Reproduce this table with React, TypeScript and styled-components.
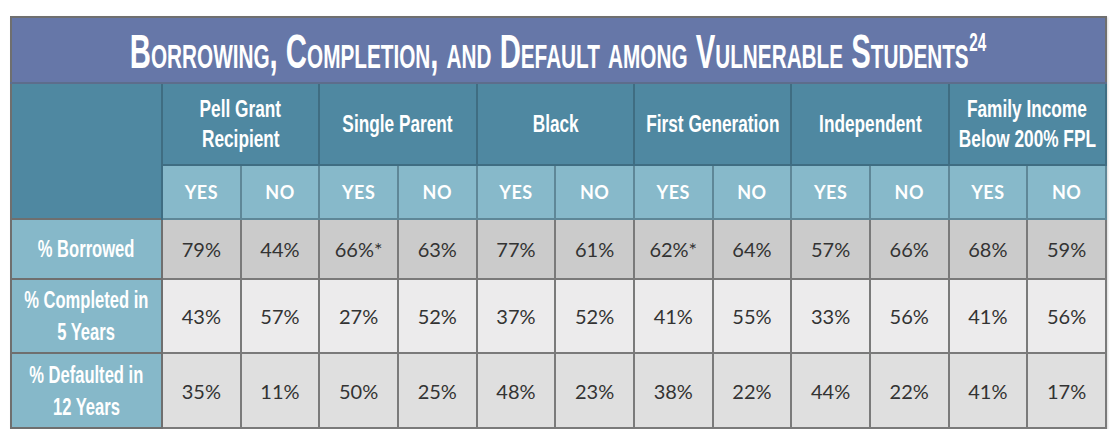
import styled, { createGlobalStyle } from 'styled-components'

const GlobalStyle = createGlobalStyle`
  html, body {
    margin: 0;
    padding: 0;
    background: #ffffff;
  }
`

// no condensed face is installed, so the headline faces are squeezed with scaleX
const condensed = `"Liberation Sans", Arial, sans-serif`

const Page = styled.div`
  padding: 16px 11px 0 10px;
`

const Table = styled.table`
  width: 1097px;
  border-collapse: collapse;
  table-layout: fixed;
  border: 2px solid #6f6f6f;
  box-shadow: 1px 1px 2px rgba(0, 0, 0, 0.15);
`

const Stack = styled.div`
  display: flex;
  flex-direction: column;
  align-items: center;
  justify-content: center;
`

const Squeeze = styled.span<{ $s: number }>`
  display: inline-block;
  white-space: nowrap;
  transform: scaleX(${({ $s }) => $s});
`

const TitleCell = styled.th`
  height: 61px;
  padding: 3px 0 0;
  background: #6677a8;
  color: #ffffff;
  font-family: ${condensed};
  font-weight: 700;
  font-size: 48px;
  line-height: 50px;
  font-variant: small-caps;
  text-align: center;
  border-bottom: 2px solid #5d6d8c;
`

const Sup = styled.sup`
  font-size: 25px;
  font-variant: normal;
  vertical-align: 17px;
  line-height: 0;
  margin-left: 1px;
`

const Corner = styled.th`
  background: #4f88a1;
  border-right: 2px solid #3f6d82;
`

const GroupCell = styled.th`
  height: 80px;
  padding: 0;
  background: #4f88a1;
  color: #ffffff;
  font-family: ${condensed};
  font-weight: 700;
  font-size: 23px;
  line-height: 30px;
  border: 2px solid #3f6d82;
  border-top: none;
`

const YesNoCell = styled.th`
  height: 52px;
  padding: 0;
  background: #87b9ca;
  color: #ffffff;
  font-family: Lato, "Open Sans", sans-serif;
  font-weight: 700;
  font-size: 18px;
  letter-spacing: 0.5px;
  text-align: center;
  border: 2px solid #5f8797;
`

const RowLabel = styled.th`
  padding: 0;
  background: #86b8c9;
  color: #ffffff;
  font-family: ${condensed};
  font-weight: 700;
  font-size: 23px;
  line-height: 32px;
  border: 2px solid #6f6f6f;
`

const Row = styled.tr<{ $h: number }>`
  height: ${({ $h }) => $h}px;
`

const DataCell = styled.td<{ $bg: string }>`
  padding: 0;
  background: ${({ $bg }) => $bg};
  color: #333333;
  font-family: Lato, "Open Sans", sans-serif;
  font-weight: 400;
  font-size: 20px;
  text-align: center;
  border: 2px solid #7a7a7a;
`

const groups = [
  ['Pell Grant', 'Recipient'],
  ['Single Parent'],
  ['Black'],
  ['First Generation'],
  ['Independent'],
  ['Family Income', 'Below 200% FPL'],
]

const rows = [
  {
    label: ['% Borrowed'],
    bg: '#cbcbcb',
    h: 60,
    values: ['79%', '44%', '66%*', '63%', '77%', '61%', '62%*', '64%', '57%', '66%', '68%', '59%'],
  },
  {
    label: ['% Completed in', '5 Years'],
    bg: '#ecebec',
    h: 74,
    values: ['43%', '57%', '27%', '52%', '37%', '52%', '41%', '55%', '33%', '56%', '41%', '56%'],
  },
  {
    label: ['% Defaulted in', '12 Years'],
    bg: '#dfdfdf',
    h: 75,
    values: ['35%', '11%', '50%', '25%', '48%', '23%', '38%', '22%', '44%', '22%', '41%', '17%'],
  },
]

function Lines({ lines, s }: { lines: string[]; s: number }) {
  return (
    <Stack>
      {lines.map((l, i) => (
        <Squeeze key={i} $s={s}>
          {l}
        </Squeeze>
      ))}
    </Stack>
  )
}

export default function App() {
  return (
    <Page>
      <GlobalStyle />
      <Table>
        <colgroup>
          <col style={{ width: 151 }} />
          {Array.from({ length: 12 }).map((_, i) => (
            <col key={i} />
          ))}
        </colgroup>
        <thead>
          <tr>
            <TitleCell colSpan={13}>
              <Stack>
                <Squeeze $s={0.61}>
                  Borrowing, Completion, and Default among Vulnerable Students<Sup>24</Sup>
                </Squeeze>
              </Stack>
            </TitleCell>
          </tr>
          <tr>
            <Corner rowSpan={2} />
            {groups.map((g, i) => (
              <GroupCell key={i} colSpan={2}>
                <Lines lines={g} s={0.75} />
              </GroupCell>
            ))}
          </tr>
          <tr>
            {groups.map((_, i) => [
              <YesNoCell key={`y${i}`}>YES</YesNoCell>,
              <YesNoCell key={`n${i}`}>NO</YesNoCell>,
            ])}
          </tr>
        </thead>
        <tbody>
          {rows.map((r, i) => (
            <Row key={i} $h={r.h}>
              <RowLabel>
                <Lines lines={r.label} s={0.72} />
              </RowLabel>
              {r.values.map((v, j) => (
                <DataCell key={j} $bg={r.bg}>
                  {v}
                </DataCell>
              ))}
            </Row>
          ))}
        </tbody>
      </Table>
    </Page>
  )
}
